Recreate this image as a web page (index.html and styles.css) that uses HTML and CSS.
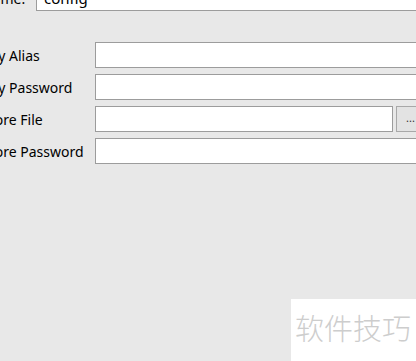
FILE: index.html
```html
<!DOCTYPE html>
<html>
<head>
<meta charset="utf-8">
<link rel="stylesheet" href="styles.css">
</head>
<body>
<div class="panel">
  <div class="row-name">
    <label class="lbl-name">Name:</label>
    <div class="field field-wide">config</div>
  </div>
  <div class="form">
    <label class="lbl">Key Alias</label>
    <div class="field"></div>
    <label class="lbl">Key Password</label>
    <div class="field"></div>
    <label class="lbl">Store File</label>
    <div class="file-group">
      <div class="field field-file"></div>
      <button class="browse">...</button>
    </div>
    <label class="lbl">Store Password</label>
    <div class="field"></div>
  </div>
</div>
<div class="watermark">软件技巧</div>
</body>
</html>
```

FILE: styles.css
```css
html, body {
  margin: 0;
  padding: 0;
  width: 416px;
  height: 361px;
  overflow: hidden;
  background: #e8e8e8;
  font-family: "Noto Sans", "Segoe UI", "Liberation Sans", sans-serif;
  font-size: 14px;
  color: #000;
}
.panel {
  margin-top: -15px;
  margin-left: -18px;
  width: 460px;
}
.row-name {
  display: grid;
  grid-template-columns: 54px 1fr;
  align-items: center;
  height: 26px;
}
.lbl-name, .lbl {
  white-space: nowrap;
}
.field {
  box-sizing: border-box;
  height: 26px;
  background: #fff;
  border: 1px solid #9c9c9c;
  padding-left: 7px;
  display: flex;
  align-items: center;
  font-size: 15px;
}
.form {
  margin-top: 31px;
  display: grid;
  grid-template-columns: 113px 1fr;
  row-gap: 6px;
  align-items: center;
}
.file-group {
  display: flex;
  gap: 3px;
}
.field-file {
  width: 298px;
  flex: none;
}
.browse {
  flex: 1;
  box-sizing: border-box;
  height: 26px;
  border: 1px solid #a8a8a8;
  background: #e3e3e3;
  font-family: "Noto Sans", sans-serif;
  font-size: 11px;
  color: #333;
  padding: 0 0 4px 9px;
  text-align: left;
  margin: 0;
}
.watermark {
  position: absolute;
  left: 291px;
  top: 299px;
  width: 125px;
  height: 62px;
  background: #fff;
  color: #cdcdcd;
  font-family: "Noto Sans CJK SC", sans-serif;
  font-size: 29px;
  font-weight: 300;
  line-height: 30px;
  padding: 13px 0 0 4px;
  box-sizing: border-box;
  white-space: nowrap;
}
```
